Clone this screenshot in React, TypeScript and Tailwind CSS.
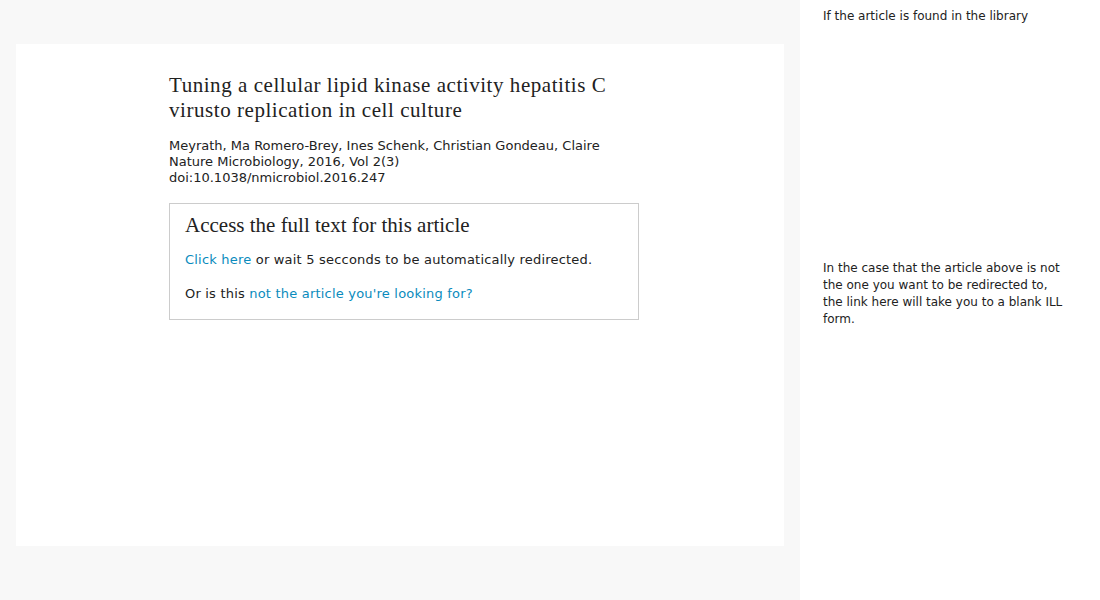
import React from "react";

const sans = { fontFamily: '"DejaVu Sans", "Open Sans", sans-serif' };
const serif = { fontFamily: '"Liberation Serif", "DejaVu Serif", serif' };

export default function App() {
  return (
    <div className="flex w-[1100px] h-[600px] bg-white text-[#222]" style={sans}>
      <div className="w-[800px] h-[600px] bg-[#f8f8f8] pt-[44px] px-[16px]">
        <div className="bg-white h-[502px] pl-[153px] pt-[29px]">
          <div className="w-[470px]">
            <h1 className="text-[21px] leading-[25px] tracking-[0.55px] text-[#222] pr-[20px]" style={serif}>
              Tuning a cellular lipid kinase activity hepatitis C virusto replication in cell culture
            </h1>
            <div className="mt-[15px] text-[13px] leading-[16px]">
              <div>Meyrath, Ma Romero-Brey, Ines Schenk, Christian Gondeau, Claire</div>
              <div>Nature Microbiology, 2016, Vol 2(3)</div>
              <div>doi:10.1038/nmicrobiol.2016.247</div>
            </div>
            <div className="mt-[17px] border border-[#cccccc] px-[15px] pt-[9px] pb-[17px]">
              <h2 className="text-[21px] leading-[25px]" style={serif}>
                Access the full text for this article
              </h2>
              <p className="mt-[14px] text-[13px] leading-[16px] tracking-[0.2px]">
                <a className="text-[#0a8bbd]">Click here</a> or wait 5 secconds to be automatically redirected.
              </p>
              <p className="mt-[18px] text-[13px] leading-[16px] tracking-[0.2px]">
                Or is this <a className="text-[#0a8bbd]">not the article you're looking for?</a>
              </p>
            </div>
          </div>
        </div>
      </div>
      <div className="flex-1 pl-[23px] pr-[33px] pt-[8px] text-[12px] leading-[17px]">
        <p>If the article is found in the library</p>
        <p className="mt-[235px]">
          In the case that the article above is not the one you want to be redirected to, the link here will take you to a blank ILL form.
        </p>
      </div>
    </div>
  );
}
